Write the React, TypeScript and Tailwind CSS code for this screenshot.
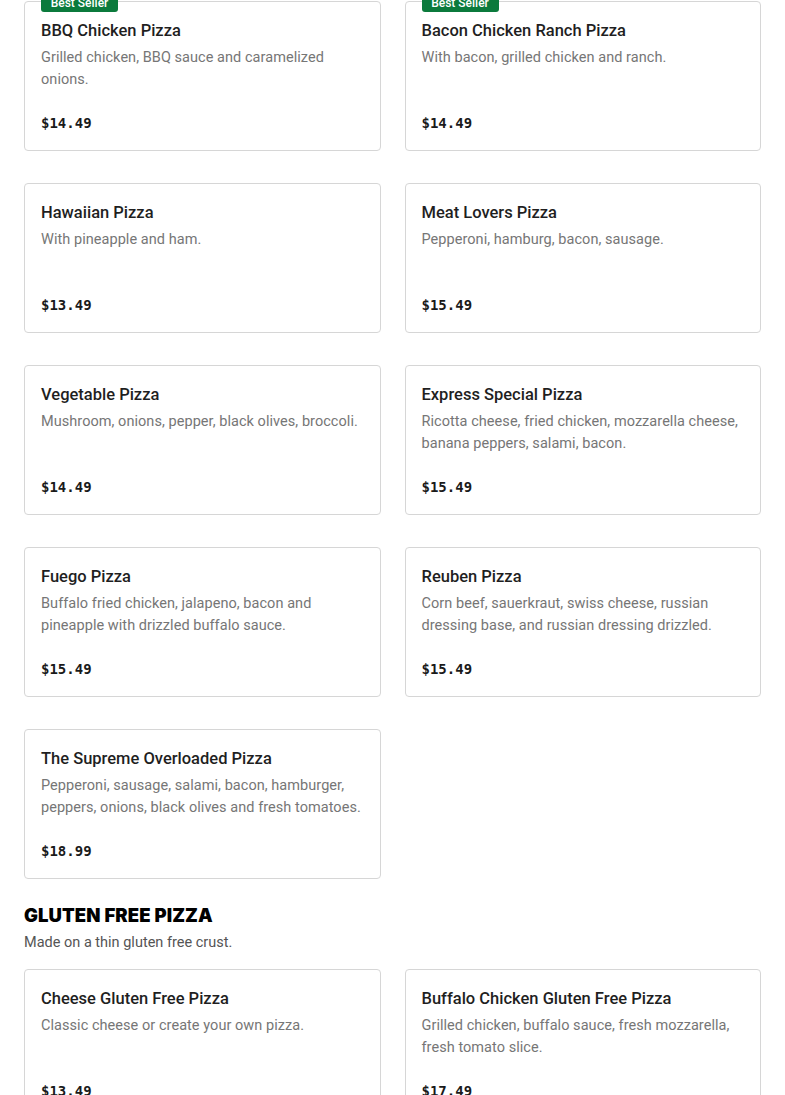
import React from "react";

type Item = { name: string; desc: string; price: string; badge?: boolean };

const pizzas: Item[] = [
  { name: "BBQ Chicken Pizza", desc: "Grilled chicken, BBQ sauce and caramelized onions.", price: "$14.49", badge: true },
  { name: "Bacon Chicken Ranch Pizza", desc: "With bacon, grilled chicken and ranch.", price: "$14.49", badge: true },
  { name: "Hawaiian Pizza", desc: "With pineapple and ham.", price: "$13.49" },
  { name: "Meat Lovers Pizza", desc: "Pepperoni, hamburg, bacon, sausage.", price: "$15.49" },
  { name: "Vegetable Pizza", desc: "Mushroom, onions, pepper, black olives, broccoli.", price: "$14.49" },
  { name: "Express Special Pizza", desc: "Ricotta cheese, fried chicken, mozzarella cheese, banana peppers, salami, bacon.", price: "$15.49" },
  { name: "Fuego Pizza", desc: "Buffalo fried chicken, jalapeno, bacon and pineapple with drizzled buffalo sauce.", price: "$15.49" },
  { name: "Reuben Pizza", desc: "Corn beef, sauerkraut, swiss cheese, russian dressing base, and russian dressing drizzled.", price: "$15.49" },
  { name: "The Supreme Overloaded Pizza", desc: "Pepperoni, sausage, salami, bacon, hamburger, peppers, onions, black olives and fresh tomatoes.", price: "$18.99" },
];

const glutenFree: Item[] = [
  { name: "Cheese Gluten Free Pizza", desc: "Classic cheese or create your own pizza.", price: "$13.49" },
  { name: "Buffalo Chicken Gluten Free Pizza", desc: "Grilled chicken, buffalo sauce, fresh mozzarella, fresh tomato slice.", price: "$17.49" },
];

const sans = { fontFamily: "Roboto, 'Noto Sans', sans-serif" };

function Card({ item }: { item: Item }) {
  return (
    <div className="relative flex h-[150px] flex-col rounded-[4px] border border-[#d6d6d6] bg-white px-4 pt-4 pb-4">
      {item.badge && (
        <div className="absolute left-4 top-[-9px] flex h-[19px] w-[77px] items-center justify-center rounded-[3px] bg-[#0b7a3c] text-[12px] font-medium text-white">
          Best Seller
        </div>
      )}
      <div className="mt-px h-6 text-[16.5px] font-medium leading-6 text-[#1f1f1f]">{item.name}</div>
      <div className="mt-1 min-h-[43px] text-[14.5px] leading-[22px] tracking-[0.05px] text-[#767676]">{item.desc}</div>
      <div
        className="mt-[21px] h-6 text-[14px] font-bold leading-6 text-[#1a1a1a]"
        style={{ fontFamily: "'DejaVu Sans Mono', 'Liberation Mono', monospace" }}
      >
        {item.price}
      </div>
    </div>
  );
}

export default function App() {
  return (
    <div className="min-h-[1095px] bg-white px-6 pt-px" style={sans}>
      <div className="grid grid-cols-2 gap-x-6 gap-y-8">
        {pizzas.map((p) => (
          <Card key={p.name} item={p} />
        ))}
      </div>
      <div
        className="mt-6 text-[18.5px] font-black leading-6 tracking-[0.1px] text-black"
        style={{ fontFamily: "Inter, Roboto, sans-serif" }}
      >
        GLUTEN FREE PIZZA
      </div>
      <div className="mt-[5px] text-[14.5px] leading-[22px] text-[#555555]">Made on a thin gluten free crust.</div>
      <div className="mt-[15px] grid grid-cols-2 gap-x-6 gap-y-8">
        {glutenFree.map((p) => (
          <Card key={p.name} item={p} />
        ))}
      </div>
    </div>
  );
}
